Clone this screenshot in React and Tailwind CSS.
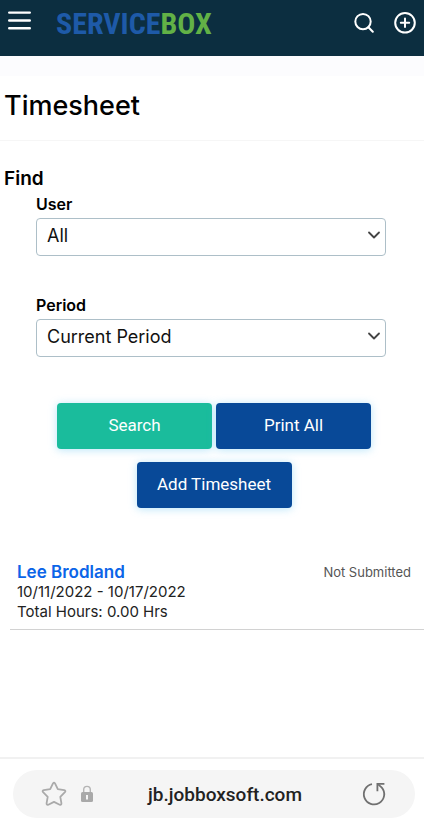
import React from 'react';
import { ChevronDown } from 'lucide-react';

const timesheets = [
  {
    name: 'Lee Brodland',
    period: '10/11/2022 - 10/17/2022',
    hours: '0.00',
    status: 'Not Submitted',
  },
];

function Header() {
  return (
    <header className="h-14 bg-[#0c2e40] flex items-start justify-between pl-2 pr-2">
      <div className="flex items-start">
        <button type="button" aria-label="Menu" className="mt-2">
          <svg width="24" height="25" viewBox="0 0 24 25" fill="none" stroke="white" strokeWidth="2.4" strokeLinecap="round">
            <path d="M1.2 4.6h20.6M1.2 12.5h20.6M1.2 20.2h20.6" />
          </svg>
        </button>
        <a href="#" className="ml-6 mt-1 text-[30px] leading-10 font-bold font-['Liberation_Sans_Narrow','Roboto_Condensed',sans-serif]">
          <span className="text-[#1e5aa8]">SERVICE</span>
          <span className="text-[#62b146]">BOX</span>
        </a>
      </div>
      <div className="flex items-center gap-5 mt-3">
        <button type="button" aria-label="Search">
          <svg width="20" height="22" viewBox="0 0 20 22" fill="none" stroke="white" strokeWidth="2" strokeLinecap="round">
            <circle cx="9" cy="9.6" r="7.7" />
            <path d="M14.4 15.2l4.4 4.6" />
          </svg>
        </button>
        <button type="button" aria-label="Add">
          <svg width="22" height="22" viewBox="0 0 22 22" fill="none" stroke="white" strokeWidth="2" strokeLinecap="round">
            <circle cx="11" cy="10.8" r="9.8" />
            <path d="M11 6.6v8.4M6.8 10.8h8.4" />
          </svg>
        </button>
      </div>
    </header>
  );
}

function SelectField({ id, label, options }) {
  return (
    <div>
      <label htmlFor={id} className="block text-base leading-5 font-semibold mb-1">
        {label}
      </label>
      <div className="relative">
        <select
          id={id}
          className="block w-full h-[38px] appearance-none rounded border border-[#adbfc8] bg-white pl-[10px] pr-8 pb-[2px] text-lg leading-6 text-[#111]"
        >
          {options.map((option) => (
            <option key={option}>{option}</option>
          ))}
        </select>
        <ChevronDown size={20} strokeWidth={2.2} className="absolute right-[2px] top-[7px] text-[#444] pointer-events-none" />
      </div>
    </div>
  );
}

function ActionButton({ className, children }) {
  return (
    <button
      type="button"
      className={`w-[155px] h-[46px] rounded text-white text-[17px] font-['Roboto',sans-serif] shadow-[0_1px_8px_rgba(80,190,240,0.4)] ${className}`}
    >
      {children}
    </button>
  );
}

function AddressBar() {
  return (
    <footer className="mt-auto border-t-2 border-[#f1f1f1] pt-[11px] pb-[19px] pl-[13px] pr-[9px]">
      <div className="h-12 rounded-full bg-[#f5f5f5] flex items-center justify-between pl-7 pr-7">
        <div className="flex items-center gap-[14px]">
          <button type="button" aria-label="Bookmark">
            <svg width="26" height="26" viewBox="0 0 26 26" fill="none" stroke="#aaa" strokeWidth="1.8" strokeLinejoin="round">
              <path d="M12 2.4Q13 .8 14 2.4L16.8 8.2L23.2 9.2Q25.2 9.7 23.9 11.2L19.3 15.8L20.4 22.2Q20.5 24.4 18.7 23.7L13 20.9L7.3 23.7Q5.5 24.4 5.6 22.2L6.7 15.8L2.1 11.2Q.8 9.7 2.8 9.2L9.2 8.2Z" />
            </svg>
          </button>
          <svg width="12" height="18" viewBox="0 0 12 18" aria-hidden="true">
            <path d="M2.7 8V4.7a3.3 3.3 0 0 1 6.6 0V8" fill="none" stroke="#b5b5b5" strokeWidth="1.4" />
            <rect x="0" y="7" width="12" height="10" rx="1.5" fill="#a9a9a9" />
            <path d="M5 10h2v4.5H5z" fill="#f5f5f5" />
          </svg>
        </div>
        <span className="text-[19px] leading-6 pt-[2px] pr-1 font-medium text-[#222] font-['Roboto',sans-serif]">jb.jobboxsoft.com</span>
        <button type="button" aria-label="Reload">
          <svg width="26" height="26" viewBox="0 0 26 26" fill="none" stroke="#707070" strokeWidth="1.8">
            <path d="M11 3.2A10.2 10.2 0 1 0 20.8 6.6L17.2 3.4" />
            <path d="M23.4 2.8H16.4V10.2" />
          </svg>
        </button>
      </div>
    </footer>
  );
}

export default function App() {
  return (
    <div className="min-h-screen flex flex-col bg-white text-black font-['Inter',sans-serif]">
      <Header />
      <div className="h-5 bg-[#fcfcfe]" />
      <h1 className="px-1 pt-3 pb-4 text-[27px] leading-9 font-medium border-b border-[#f6f6f6]">Timesheet</h1>

      <main>
        <form onSubmit={(e) => e.preventDefault()}>
          <h2 className="px-1 pt-6 text-[19px] leading-7 font-semibold">Find</h2>
          <div className="pl-9 pr-[38px] pt-[1px] flex flex-col gap-[39px]">
            <SelectField id="user" label="User" options={['All']} />
            <SelectField id="period" label="Period" options={['Current Period']} />
          </div>
          <div className="mt-[46px] pl-1 flex flex-col items-center gap-[13px]">
            <div className="flex gap-1">
              <ActionButton className="bg-[#1abc9c]">Search</ActionButton>
              <ActionButton className="bg-[#084998]">Print All</ActionButton>
            </div>
            <ActionButton className="bg-[#084998]">Add Timesheet</ActionButton>
          </div>
        </form>

        <ul className="mt-[54px] ml-[10px]">
          {timesheets.map((sheet) => (
            <li key={sheet.name} className="flex justify-between pl-[7px] pr-[13px] pb-[7px] border-b border-[#d2d2d2]">
              <div className="text-[15px] leading-5 text-[#222]">
                <a href="#" className="block text-[17px] leading-5 font-semibold text-[#0b65e8]">{sheet.name}</a>
                <p>{sheet.period}</p>
                <p>Total Hours: {sheet.hours} Hrs</p>
              </div>
              <span className="text-[13px] leading-5 text-[#555]">{sheet.status}</span>
            </li>
          ))}
        </ul>
      </main>

      <AddressBar />
    </div>
  );
}
